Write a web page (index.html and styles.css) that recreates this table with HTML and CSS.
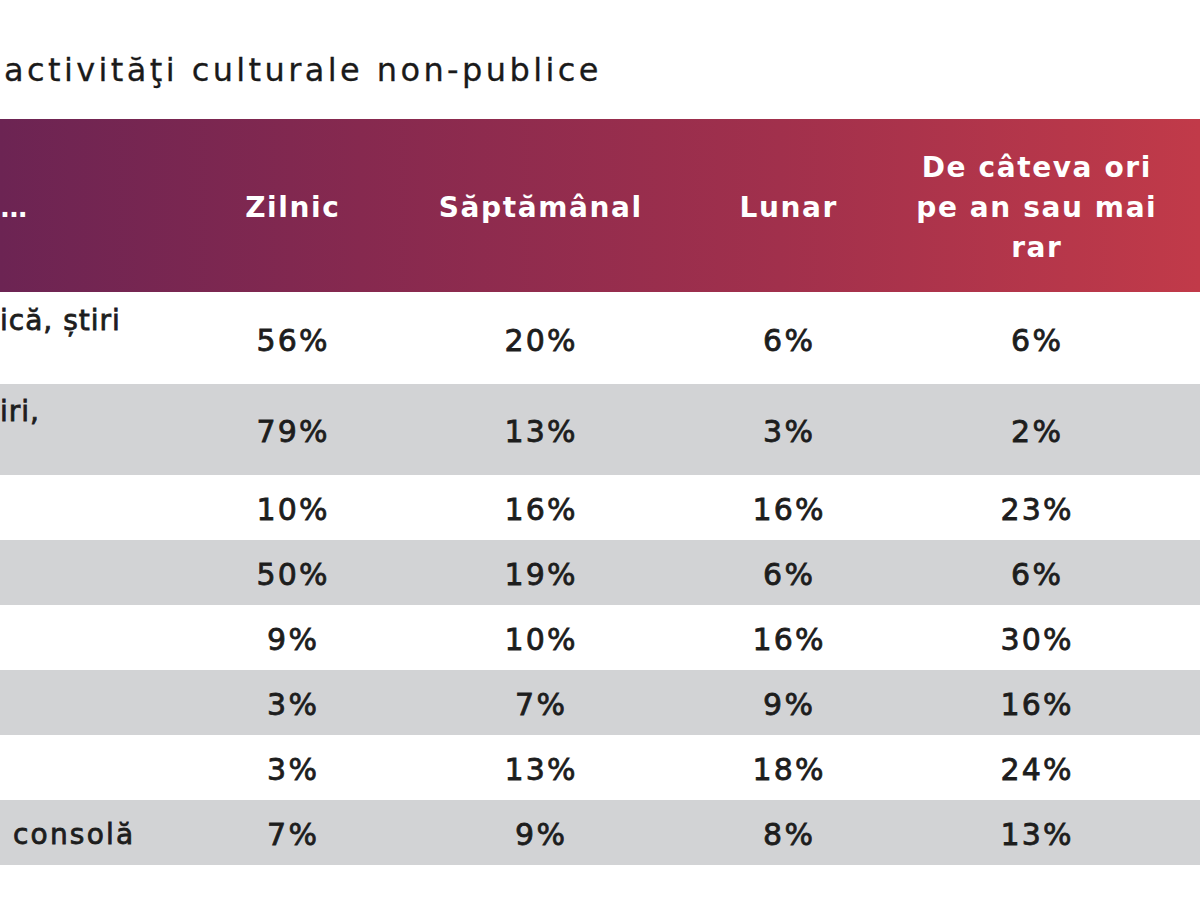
FILE: index.html
```html
<!DOCTYPE html>
<html lang="ro">
<head>
<meta charset="utf-8">
<title>Activităţi culturale non-publice</title>
<link rel="stylesheet" href="styles.css">
</head>
<body>
<div class="page">
  <h1 class="title">activităţi culturale non-publice</h1>
  <div class="table">
    <div class="head">
      <div class="hcell label">...</div>
      <div class="hcell">Zilnic</div>
      <div class="hcell">Săptămânal</div>
      <div class="hcell">Lunar</div>
      <div class="hcell">De câteva ori<br>pe an sau mai<br>rar</div>
      <div class="hcell"></div>
    </div>
    <div class="row tall">
      <div class="cell label tight"><span>ică, știri<br>&nbsp;</span></div>
      <div class="cell">56%</div><div class="cell">20%</div><div class="cell">6%</div><div class="cell">6%</div><div class="cell"></div>
    </div>
    <div class="row tall alt">
      <div class="cell label tight"><span>iri,<br>&nbsp;</span></div>
      <div class="cell">79%</div><div class="cell">13%</div><div class="cell">3%</div><div class="cell">2%</div><div class="cell"></div>
    </div>
    <div class="row">
      <div class="cell label"></div>
      <div class="cell">10%</div><div class="cell">16%</div><div class="cell">16%</div><div class="cell">23%</div><div class="cell"></div>
    </div>
    <div class="row alt">
      <div class="cell label"></div>
      <div class="cell">50%</div><div class="cell">19%</div><div class="cell">6%</div><div class="cell">6%</div><div class="cell"></div>
    </div>
    <div class="row">
      <div class="cell label"></div>
      <div class="cell">9%</div><div class="cell">10%</div><div class="cell">16%</div><div class="cell">30%</div><div class="cell"></div>
    </div>
    <div class="row alt">
      <div class="cell label"></div>
      <div class="cell">3%</div><div class="cell">7%</div><div class="cell">9%</div><div class="cell">16%</div><div class="cell"></div>
    </div>
    <div class="row">
      <div class="cell label"></div>
      <div class="cell">3%</div><div class="cell">13%</div><div class="cell">18%</div><div class="cell">24%</div><div class="cell"></div>
    </div>
    <div class="row alt">
      <div class="cell label last"><span>consolă</span></div>
      <div class="cell">7%</div><div class="cell">9%</div><div class="cell">8%</div><div class="cell">13%</div><div class="cell"></div>
    </div>
  </div>
</div>
</body>
</html>
```
FILE: styles.css
```css
html, body {
  margin: 0;
  padding: 0;
  background: #ffffff;
}
.page {
  width: 1200px;
  height: 900px;
  overflow: hidden;
  font-family: "DejaVu Sans", "Noto Sans", sans-serif;
  color: #1c1c1c;
}
.title {
  margin: 0;
  padding: 52px 0 0 4px;
  height: 67px;
  font-size: 32px;
  line-height: 36px;
  font-weight: 400;
  color: #1a1a1a;
  letter-spacing: 3.4px;
  white-space: nowrap;
  -webkit-text-stroke: 0.3px #1a1a1a;
}
.table {
  display: flex;
  flex-direction: column;
}
.head, .row {
  display: grid;
  grid-template-columns: 168px 248px 248px 248px 248px 40px;
}
.head {
  height: 173px;
  background: linear-gradient(90deg, #6c2453 0%, #86294f 30%, #a1304c 65%, #c13a49 100%);
  color: #fff;
}
.hcell {
  display: flex;
  align-items: center;
  justify-content: center;
  text-align: center;
  font-size: 28px;
  line-height: 40px;
  font-weight: 700;
  letter-spacing: 1.6px;
  padding-left: 1.6px;
  padding-top: 5px;
}
.hcell.label {
  justify-content: flex-start;
  padding-left: 0;
  letter-spacing: -1px;
  font-size: 26px;
}
.row {
  height: 65px;
  background: #ffffff;
}
.row.tall {
  height: 92px;
}
.row.tall.alt {
  height: 91px;
}
.row.alt {
  background: #d2d3d5;
}
.cell {
  display: flex;
  align-items: center;
  justify-content: center;
  font-size: 30px;
  line-height: 40px;
  font-weight: 400;
  color: #1d1d1d;
  -webkit-text-stroke: 0.8px #1d1d1d;
  letter-spacing: 2.2px;
  padding-left: 2.2px;
  padding-top: 5px;
}
.cell.label {
  justify-content: flex-start;
  white-space: nowrap;
  padding-left: 0;
  font-size: 28px;
  letter-spacing: 2.2px;
}
.cell.label.tight {
  letter-spacing: 1px;
}
.cell.label.last {
  padding-left: 13px;
}
```
